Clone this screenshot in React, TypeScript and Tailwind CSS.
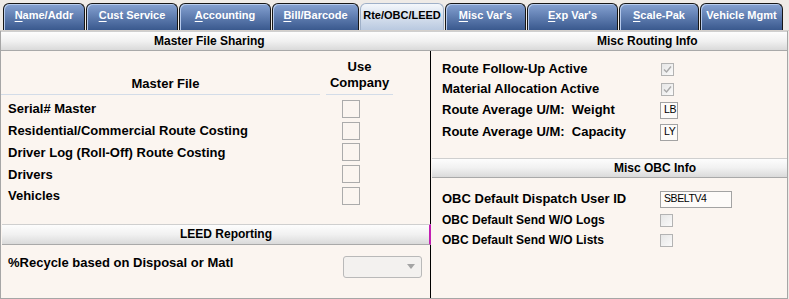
import * as React from "react";

const tabs = [
  { key: "N", rest: "ame/Addr", w: "w-[82px]" },
  { key: "C", rest: "ust Service", w: "w-[92px]" },
  { key: "A", rest: "ccounting", w: "w-[92px]" },
  { key: "B", rest: "ill/Barcode", w: "w-[87px]" },
  { key: "", rest: "Rte/OBC/LEED", w: "w-[84px]", active: true },
  { key: "M", rest: "isc Var's", w: "w-[81px]" },
  { key: "E", rest: "xp Var's", w: "w-[91px]" },
  { key: "S", rest: "cale-Pak", w: "w-[80px]" },
  { key: "", rest: "Vehicle Mgmt", w: "w-[83px]" },
];

const masterRows = [
  "Serial# Master",
  "Residential/Commercial Route Costing",
  "Driver Log (Roll-Off) Route Costing",
  "Drivers",
  "Vehicles",
];

const Tab = ({ t }: { t: (typeof tabs)[number] }) => {
  if (t.active) {
    return (
      <div
        className={`${t.w} h-[27px] shrink-0 rounded-t-[6px] border border-b-0 border-[#9fb0c8] bg-gradient-to-b from-[#f4f7fb] to-[#b9c9e0] flex items-center justify-center pb-[3px] text-[11px] font-bold text-black`}
      >
        {t.rest}
      </div>
    );
  }
  return (
    <div
      className={`${t.w} h-[27px] shrink-0 rounded-t-[6px] border border-b-0 border-[#161616] bg-gradient-to-b from-[#86a2d2] to-[#3a598e] shadow-[inset_1px_1px_0_#b6caec] flex items-center justify-center pb-[3px] text-[11px] font-bold text-white`}
    >
      {t.key && <span className="underline underline-offset-2">{t.key}</span>}
      {t.rest}
    </div>
  );
};

const SectionBar = ({ title, pad }: { title: string; pad: string }) => (
  <div
    className={`h-[20px] border-t border-b border-t-[#cfcfcf] border-b-[#a9a9a9] bg-gradient-to-b from-[#fdfdfd] via-[#f1f1f1] to-[#dadada] flex items-center ${pad} text-[12px] font-bold text-black`}
  >
    {title}
  </div>
);

const Box = () => (
  <div className="w-[18px] h-[18px] border border-[#ababab] bg-[#fbf5f0]" />
);

const SmallCheck = ({ checked }: { checked?: boolean }) => (
  <div className="w-[13px] h-[13px] border border-[#b3b3b3] bg-gradient-to-br from-[#e6e6e6] to-[#fafafa] flex items-center justify-center">
    {checked && (
      <svg width="9" height="9" viewBox="0 0 9 9">
        <path d="M1 4.5 L3.5 7 L8 1.5" fill="none" stroke="#a9a9a9" strokeWidth="1.4" />
      </svg>
    )}
  </div>
);

const TextBox = ({ value, w }: { value: string; w: string }) => (
  <div
    className={`${w} h-[17px] border border-[#a3a3a3] bg-[#fdfbf9] flex items-center pl-[3px] text-[10.5px] tracking-[-0.4px] text-black`}
  >
    {value}
  </div>
);

export default function App() {
  return (
    <div
      className="w-[789px] h-[299px] overflow-hidden bg-[#efebe7] text-black"
      style={{ fontFamily: '"Liberation Sans", Arial, sans-serif' }}
    >
      {/* tab strip */}
      <div className="h-[31px] flex items-end gap-[1px] pl-[3px] border-b border-[#d4d0cc]">
        {tabs.map((t) => (
          <Tab key={t.rest} t={t} />
        ))}
      </div>

      <div className="w-[788px] h-[268px] border-l border-r border-b border-[#a6a6a6] bg-[#fbf5f0] flex flex-col">
        {/* top headers */}
        <div className="grid grid-cols-[431px_1fr]">
          <SectionBar title="Master File Sharing" pad="pl-[153px]" />
          <SectionBar title="Misc Routing Info" pad="pl-[165px]" />
        </div>

        <div className="flex-1 grid grid-cols-[430px_1fr]">
          {/* left column */}
          <div className="border-r border-black flex flex-col">
            <div className="flex items-end h-[44px] pr-[37px]">
              <div className="w-[319px] h-[22px] border-b border-[#d3dce8] flex items-center justify-center pl-[10px] text-[13px] font-bold">
                Master File
              </div>
              <div className="ml-[6px] w-[67px] border-b border-[#d3dce8] flex flex-col items-center leading-[16px] pb-[3px] text-[13px] font-bold">
                <span>Use</span>
                <span>Company</span>
              </div>
            </div>
            <div className="pt-[3px]">
              {masterRows.map((r) => (
                <div key={r} className="h-[21.8px] flex items-center">
                  <span className="w-[341px] pl-[7px] text-[13px] font-bold">{r}</span>
                  <Box />
                </div>
              ))}
            </div>
            <div className="mt-[17px] mr-[-1px]">
              <div className="h-[21px] border-t border-b border-t-[#cfcfcf] border-b-[#a9a9a9] border-r-2 border-r-[#c21fb2] bg-gradient-to-b from-[#fdfdfd] via-[#f1f1f1] to-[#dadada] flex items-center pl-[178px] ml-[1px] text-[12px] font-bold">
                LEED Reporting
              </div>
            </div>
            <div className="flex items-start pt-[10px]">
              <span className="w-[342px] pl-[7px] leading-[15px] text-[13px] font-bold">
                %Recycle based on Disposal or Matl
              </span>
              <div className="mt-[1px] w-[79px] h-[22px] rounded-[3px] border border-[#b9b9b9] bg-[#f3f1ef] flex items-center justify-end pr-[6px]">
                <svg width="8" height="5" viewBox="0 0 8 5">
                  <path d="M0 0 H8 L4 5 Z" fill="#a4a4a4" />
                </svg>
              </div>
            </div>
          </div>

          {/* right column */}
          <div className="flex flex-col">
            <div className="pt-[8px] pl-[11px]">
              <div className="h-[20px] flex items-center">
                <span className="w-[219px] text-[13px] font-bold">Route Follow-Up Active</span>
                <SmallCheck checked />
              </div>
              <div className="h-[20px] flex items-center">
                <span className="w-[219px] text-[13px] font-bold">Material Allocation Active</span>
                <SmallCheck checked />
              </div>
              <div className="h-[22px] flex items-center">
                <span className="w-[218px] text-[13px] font-bold whitespace-pre">Route Average U/M:  Weight</span>
                <TextBox value="LB" w="w-[18px]" />
              </div>
              <div className="h-[22px] flex items-center">
                <span className="w-[218px] text-[13px] font-bold whitespace-pre">Route Average U/M:  Capacity</span>
                <TextBox value="LY" w="w-[18px]" />
              </div>
            </div>
            <div className="mt-[15px] ml-[1px]">
              <SectionBar title="Misc OBC Info" pad="pl-[182px]" />
            </div>
            <div className="pt-[10px] pl-[11px]">
              <div className="h-[22px] flex items-center">
                <span className="w-[218px] text-[13px] font-bold">OBC Default Dispatch User ID</span>
                <TextBox value="SBELTV4" w="w-[72px]" />
              </div>
              <div className="h-[20px] flex items-center">
                <span className="w-[218px] text-[12px] font-bold">OBC Default Send W/O Logs</span>
                <SmallCheck />
              </div>
              <div className="h-[20px] flex items-center">
                <span className="w-[218px] text-[12px] font-bold">OBC Default Send W/O Lists</span>
                <SmallCheck />
              </div>
            </div>
          </div>
        </div>
      </div>
    </div>
  );
}
